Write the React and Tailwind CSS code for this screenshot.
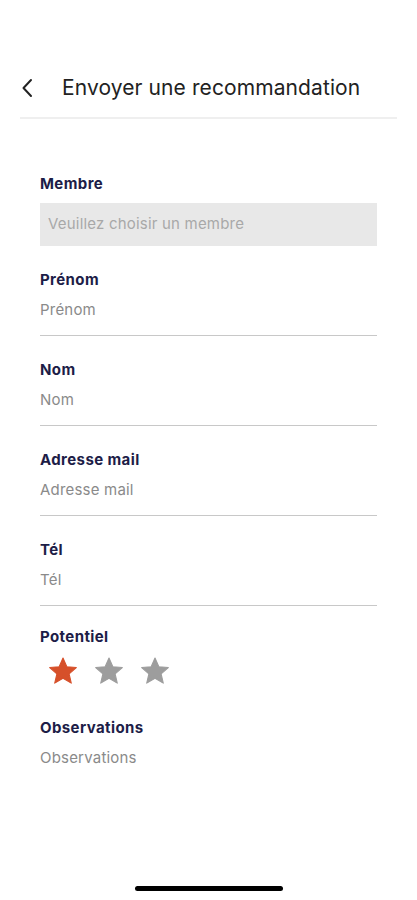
import React from "react";

const fields = ["Prénom", "Nom", "Adresse mail", "Tél"];

const Star = ({ color }) => (
  <svg width="32" height="32" viewBox="0 0 24 24">
    <path
      d="M12 2.2l2.9 6.6 7.1.6-5.4 4.7 1.6 7-6.2-3.7-6.2 3.7 1.6-7L2 9.4l7.1-.6z"
      fill={color}
      stroke={color}
      strokeWidth="0.8"
      strokeLinejoin="round"
    />
  </svg>
);

const Label = ({ children }) => (
  <p className="text-[15px] leading-5 font-bold tracking-[0.4px] text-[#1d1d47]">{children}</p>
);

const App = () => {
  return (
    <div className="min-h-[900px] flex flex-col bg-white font-['Inter',sans-serif]">
      <div className="px-5 pt-[74px]">
        <div className="flex items-center h-7">
          <svg width="14" height="20" viewBox="0 0 14 20" className="ml-[1px]">
            <path d="M10 2L2.5 10l7.5 8" fill="none" stroke="#222" strokeWidth="2" strokeLinecap="round" strokeLinejoin="round" />
          </svg>
          <h1 className="ml-[27px] text-[21px] leading-7 tracking-[0.1px] text-[#222]">
            Envoyer une recommandation
          </h1>
        </div>
        <div className="mt-[15px] h-[2px] bg-[#efefef]" />
      </div>

      <div className="px-10 mt-[55px]">
        <Label>Membre</Label>
        <div className="mt-[9px] h-[43px] bg-[#e8e8e8] flex items-center px-2">
          <span className="text-[15px] tracking-[0.2px] text-[#a8a8a8]">Veuillez choisir un membre</span>
        </div>

        {fields.map((f) => (
          <div key={f} className="mt-6">
            <Label>{f}</Label>
            <p className="mt-[10px] text-[15px] leading-5 tracking-[0.2px] text-[#8a8a8a]">{f}</p>
            <div className="mt-[15px] h-px bg-[#c8c8c8]" />
          </div>
        ))}

        <div className="mt-[21px]">
          <Label>Potentiel</Label>
          <div className="mt-[8px] pl-[7px] flex gap-[14px]">
            <Star color="#d6502a" />
            <Star color="#9d9d9d" />
            <Star color="#9d9d9d" />
          </div>
        </div>

        <div className="mt-[31px]">
          <Label>Observations</Label>
          <p className="mt-[10px] text-[15px] leading-5 tracking-[0.2px] text-[#8a8a8a]">Observations</p>
        </div>
      </div>

      <div className="mt-auto mb-[9px] flex justify-center">
        <div className="w-[148px] h-[5px] rounded-full bg-black" />
      </div>
    </div>
  );
};

export default App;
